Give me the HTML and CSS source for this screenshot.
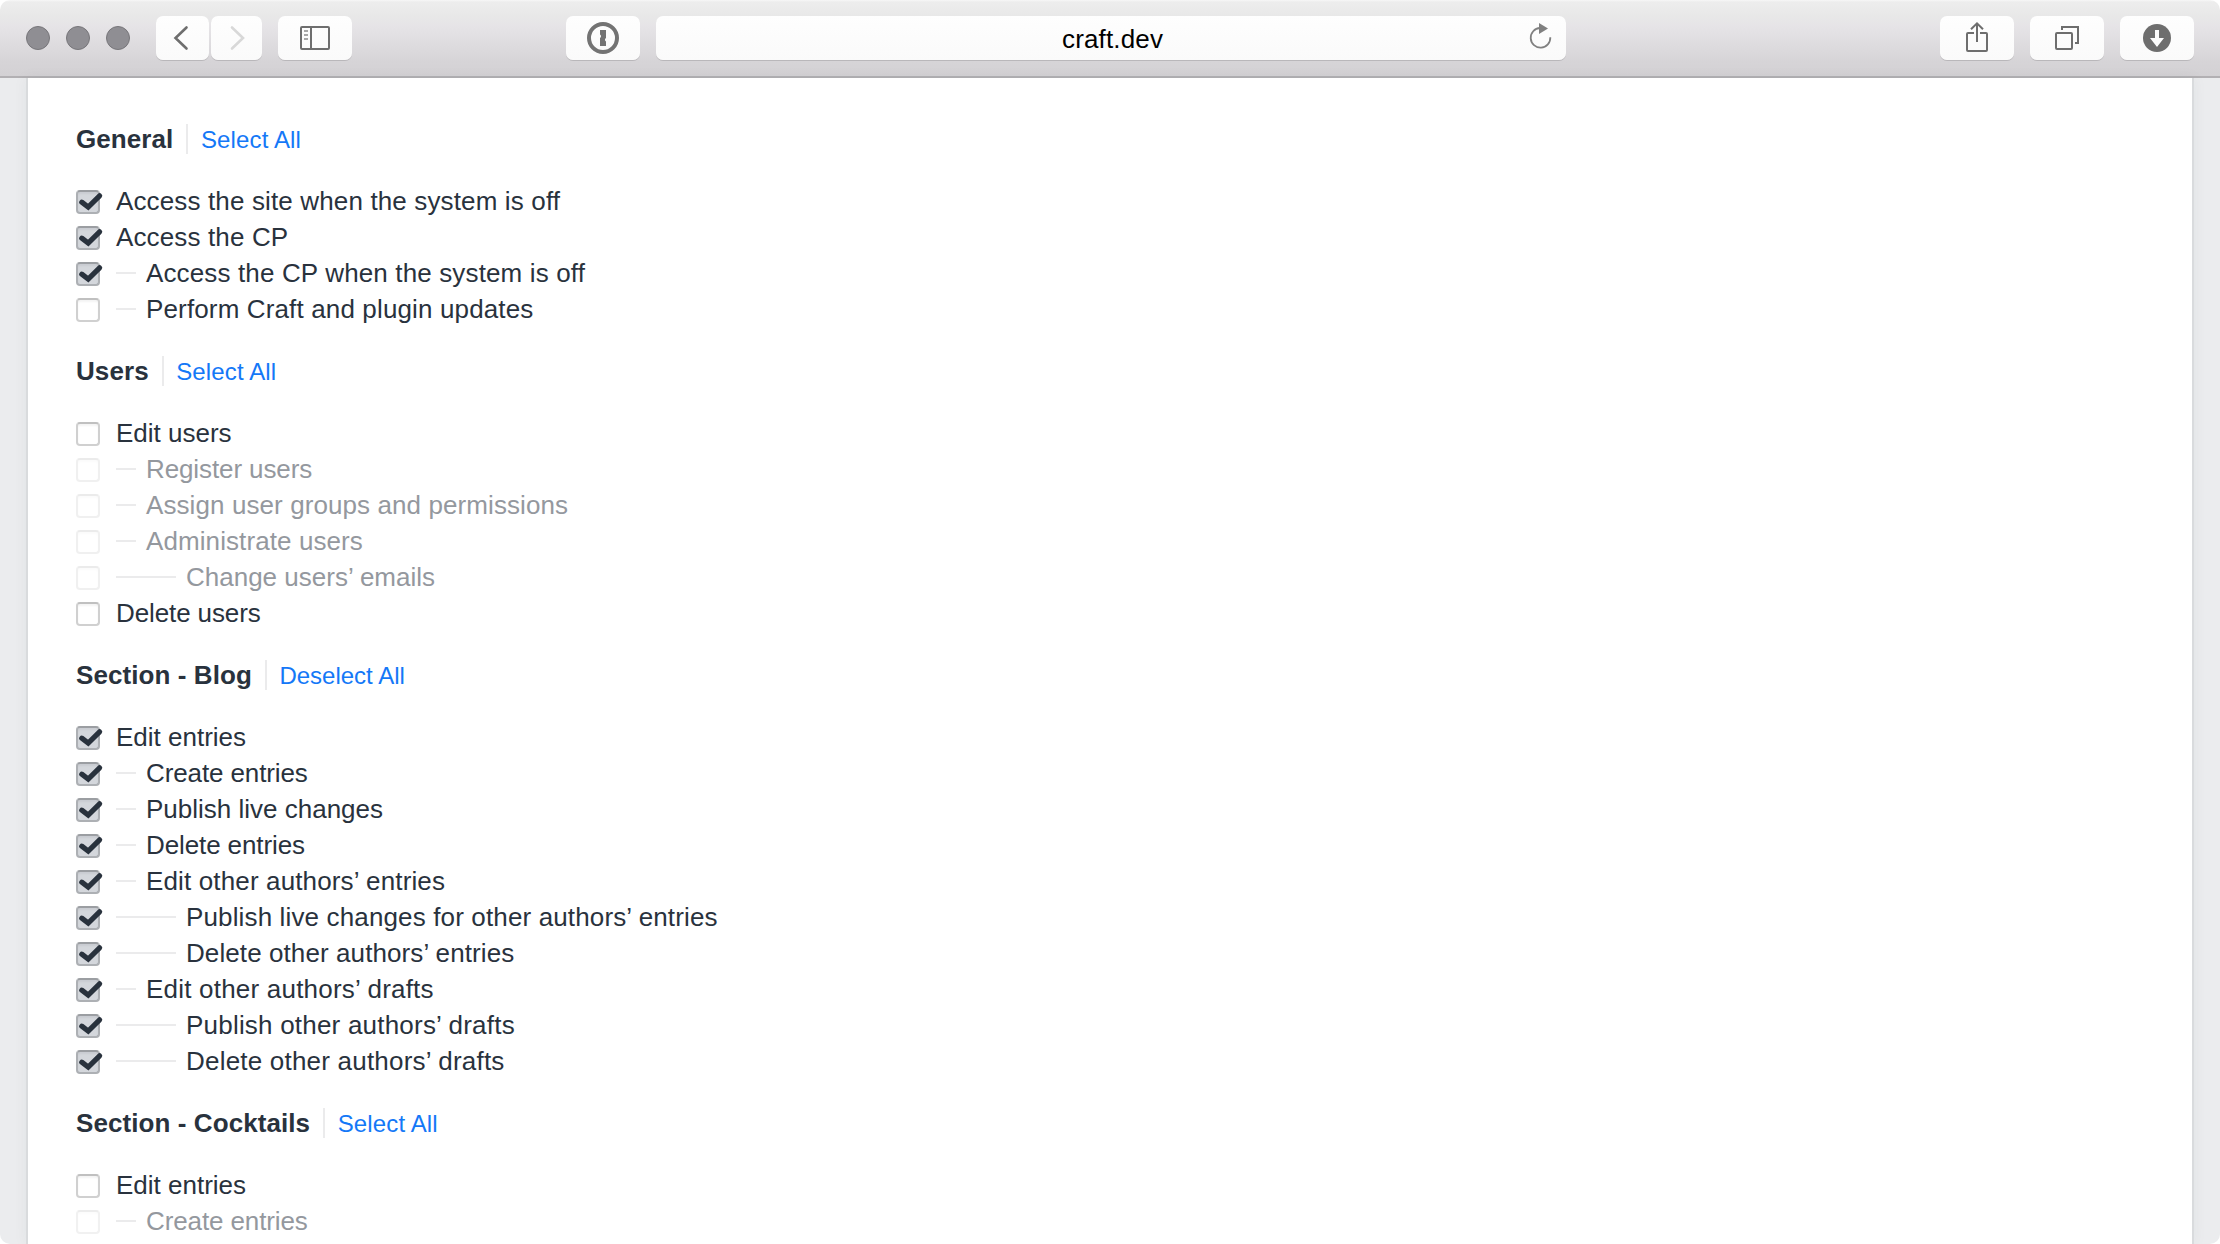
FILE: index.html
```
<!DOCTYPE html>
<html lang="en">
<head>
<meta charset="utf-8">
<title>craft.dev</title>
<link rel="stylesheet" href="styles.css">
</head>
<body>
<div class="window">
  <header class="toolbar">
    <div class="lights"><i></i><i></i><i></i></div>
    <div class="nav">
      <div class="btn back"><svg width="53" height="44"><path d="M30.5 11.5 19.5 22l11 10.5" fill="none" stroke="#6e6e6e" stroke-width="2.6" stroke-linecap="round" stroke-linejoin="miter"/></svg></div>
      <div class="btn forward"><svg width="51" height="44"><path d="M21 11.5 32 22 21 32.5" fill="none" stroke="#d8d8d8" stroke-width="2.6" stroke-linecap="round"/></svg></div>
    </div>
    <div class="btn sidebar"><svg width="74" height="44" fill="none" stroke="#6e6e6e" stroke-width="2"><rect x="23" y="11" width="28" height="22" rx="1"/><path d="M33 11v22"/><path d="M26 15h4M26 19h4M26 23h4" stroke="#8c8c8c" stroke-width="1.6"/></svg></div>
    <div class="btn onepass"><svg width="74" height="44"><circle cx="37" cy="22" r="14" fill="none" stroke="#737373" stroke-width="4"/><path d="M34 14h6v8a2 2 0 0 0 0 3.500V30h-6v-8a2 2 0 0 0 0-3.500z" fill="#737373"/></svg></div>
    <div class="address">
      <span class="url">craft.dev</span>
      <svg class="reload" width="28" height="44"><path d="M22.3 21.2A9.800 9.800 0 1 1 12 12" fill="none" stroke="#808080" stroke-width="1.8"/><path d="M11 7v11l9-5.500z" fill="#808080"/></svg>
    </div>
    <div class="actions">
      <div class="btn"><svg width="74" height="44" fill="none" stroke="#6e6e6e" stroke-width="2"><path d="M34 17h-6a1 1 0 0 0-1 1v16a1 1 0 0 0 1 1h18a1 1 0 0 0 1-1V18a1 1 0 0 0-1-1h-6"/><path d="M37 26V8M31 13.3 37 7.3l6 6"/></svg></div>
      <div class="btn"><svg width="74" height="44" fill="none" stroke="#6e6e6e" stroke-width="2"><rect x="26" y="17" width="16" height="16" rx="1"/><path d="M32 14v-3h16v16h-3"/></svg></div>
      <div class="btn"><svg width="74" height="44"><circle cx="37" cy="22" r="14" fill="#6e6e6e"/><path d="M35 14h4v8h5l-7 9-7-9h5z" fill="#fcfcfc"/></svg></div>
    </div>
  </header>
  <main class="page">
    <div class="pane">
      <section class="group">
        <div class="heading"><h2>General</h2><a class="wide">Select All</a></div>
        <ul>
          <li><b class="box on"></b><span class="wide">Access the site when the system is off</span></li>
          <li><b class="box on"></b><span class="wide">Access the CP</span></li>
          <li><b class="box on"></b><i class="dash"></i><span class="wide">Access the CP when the system is off</span></li>
          <li><b class="box"></b><i class="dash"></i><span class="wide">Perform Craft and plugin updates</span></li>
        </ul>
      </section>
      <section class="group">
        <div class="heading"><h2>Users</h2><a class="wide">Select All</a></div>
        <ul>
          <li><b class="box"></b><span class="snug">Edit users</span></li>
          <li class="off"><b class="box"></b><i class="dash"></i><span class="tight">Register users</span></li>
          <li class="off"><b class="box"></b><i class="dash"></i><span>Assign user groups and permissions</span></li>
          <li class="off"><b class="box"></b><i class="dash"></i><span>Administrate users</span></li>
          <li class="off"><b class="box"></b><i class="dash deep"></i><span class="snug">Change users’ emails</span></li>
          <li><b class="box"></b><span class="tight">Delete users</span></li>
        </ul>
      </section>
      <section class="group">
        <div class="heading"><h2>Section - Blog</h2><a class="snug">Deselect All</a></div>
        <ul>
          <li><b class="box on"></b><span class="snug">Edit entries</span></li>
          <li><b class="box on"></b><i class="dash"></i><span class="tight">Create entries</span></li>
          <li><b class="box on"></b><i class="dash"></i><span class="snug">Publish live changes</span></li>
          <li><b class="box on"></b><i class="dash"></i><span class="tight">Delete entries</span></li>
          <li><b class="box on"></b><i class="dash"></i><span class="wide">Edit other authors’ entries</span></li>
          <li><b class="box on"></b><i class="dash deep"></i><span class="wide">Publish live changes for other authors’ entries</span></li>
          <li><b class="box on"></b><i class="dash deep"></i><span>Delete other authors’ entries</span></li>
          <li><b class="box on"></b><i class="dash"></i><span class="wider">Edit other authors’ drafts</span></li>
          <li><b class="box on"></b><i class="dash deep"></i><span class="wider">Publish other authors’ drafts</span></li>
          <li><b class="box on"></b><i class="dash deep"></i><span class="wider">Delete other authors’ drafts</span></li>
        </ul>
      </section>
      <section class="group">
        <div class="heading"><h2>Section - Cocktails</h2><a class="wide">Select All</a></div>
        <ul>
          <li><b class="box"></b><span class="snug">Edit entries</span></li>
          <li class="off"><b class="box"></b><i class="dash"></i><span class="tight">Create entries</span></li>
        </ul>
      </section>
    </div>
  </main>
</div>
<svg width="0" height="0" class="defs"><symbol id="check" viewBox="0 0 28 24"><path d="M5.8 12.2 12.2 17 23.600 5.800" fill="none" stroke="#29323d" stroke-width="5.2" stroke-linejoin="miter" stroke-linecap="round"/></symbol></svg>
<script src="checks.js"></script>
</body>
</html>
```
FILE: checks.js
```
// Put the tick glyph into every checked box.
document.querySelectorAll('.box.on').forEach(function (box) {
  box.innerHTML = '<svg width="28" height="24"><use href="#check"/></svg>';
});
```
FILE: styles.css
```
* { box-sizing: border-box; }

body {
  margin: 0;
  background: #fff;
  color: #29323d;
  font: 26px/36px "Liberation Sans", Arial, sans-serif;
}

.defs { display: none; }
svg { display: block; }

.window {
  display: flex;
  flex-direction: column;
  height: 1244px;
  overflow: hidden;
  border-radius: 10px;
}

/* Browser toolbar */
.toolbar {
  display: flex;
  flex: none;
  align-items: flex-start;
  height: 78px;
  padding: 16px 26px 0;
  background: linear-gradient(#f7f7f7 0, #ededed 2px, #e8e8e8 16px, #e6e4e7 26px, #d6d4d7 62px, #d3d1d4 76px);
  border-bottom: 2px solid #b2b0b3;
}

.lights { display: flex; gap: 16px; padding-top: 10px; }
.lights i {
  width: 24px;
  height: 24px;
  border: 1px solid #77767a;
  border-radius: 50%;
  background: #8f8e93;
}

.nav { display: flex; gap: 2px; margin-left: 26px; }

.btn, .address {
  height: 44px;
  border-radius: 7px;
  background: linear-gradient(#fefefe, #fafafa);
  box-shadow: 0 1px 0 #b9b7ba;
}
.btn { width: 74px; }
.back { width: 53px; }
.forward { width: 51px; }
.sidebar { margin-left: 16px; }
.onepass { margin-left: 214px; }

.address {
  display: flex;
  width: 910px;
  margin-left: 16px;
  color: #000;
}
.url { flex: 1; padding-left: 406px; line-height: 46px; letter-spacing: .16px; }
.reload { margin-right: 10px; }

.actions { display: flex; gap: 16px; margin-left: auto; }

/* Page */
.page { display: flex; flex: 1; min-height: 0; padding: 0 26px; background: #ebecee; }
.pane {
  flex: 1;
  padding: 43px 48px 0;
  background: #fff;
  border: solid #d9dbdd;
  border-width: 0 2px;
  box-shadow: 0 0 14px rgba(41, 50, 61, .05);
}

.group { margin-bottom: 27px; }

.heading { display: flex; align-items: center; height: 36px; margin-bottom: 25px; }
h2 { margin: 0; font-size: 26px; line-height: 36px; letter-spacing: .08px; }
.heading a {
  height: 30px;
  margin-left: 13px;
  padding-left: 12.5px;
  border-left: 2px solid #ebebec;
  color: #1478f7;
  font-size: 24px;
  line-height: 32px;
}

ul { margin: 0; padding: 0; list-style: none; }
li { display: flex; height: 36px; line-height: 38px; letter-spacing: .09px; white-space: nowrap; }
.off { color: #94989e; }

.box {
  flex: none;
  width: 24px;
  height: 24px;
  margin: 8px 16px 0 0;
  border: 2px solid #d0d0d0;
  border-top-color: #c0c0c0;
  border-radius: 4px;
  background: #fff;
  box-shadow: inset 0 2px 2px #f4f4f4;
}
.box.on {
  border-color: #adb0b4;
  border-top-color: #9b9ea2;
  background: #d4d7dc;
  box-shadow: inset 0 2px 2px #c9ccd1;
}
.box svg { margin: -2px; }
.off .box { opacity: .3; }

.dash { flex: none; width: 20px; height: 2px; margin: 18px 10px 0 0; background: #ebebec; }
.deep { width: 60px; }

/* Letter fitting */
.tight { letter-spacing: -.11px; }
.snug { letter-spacing: 0; }
.wide { letter-spacing: .14px; }
.wider { letter-spacing: .21px; }
```
